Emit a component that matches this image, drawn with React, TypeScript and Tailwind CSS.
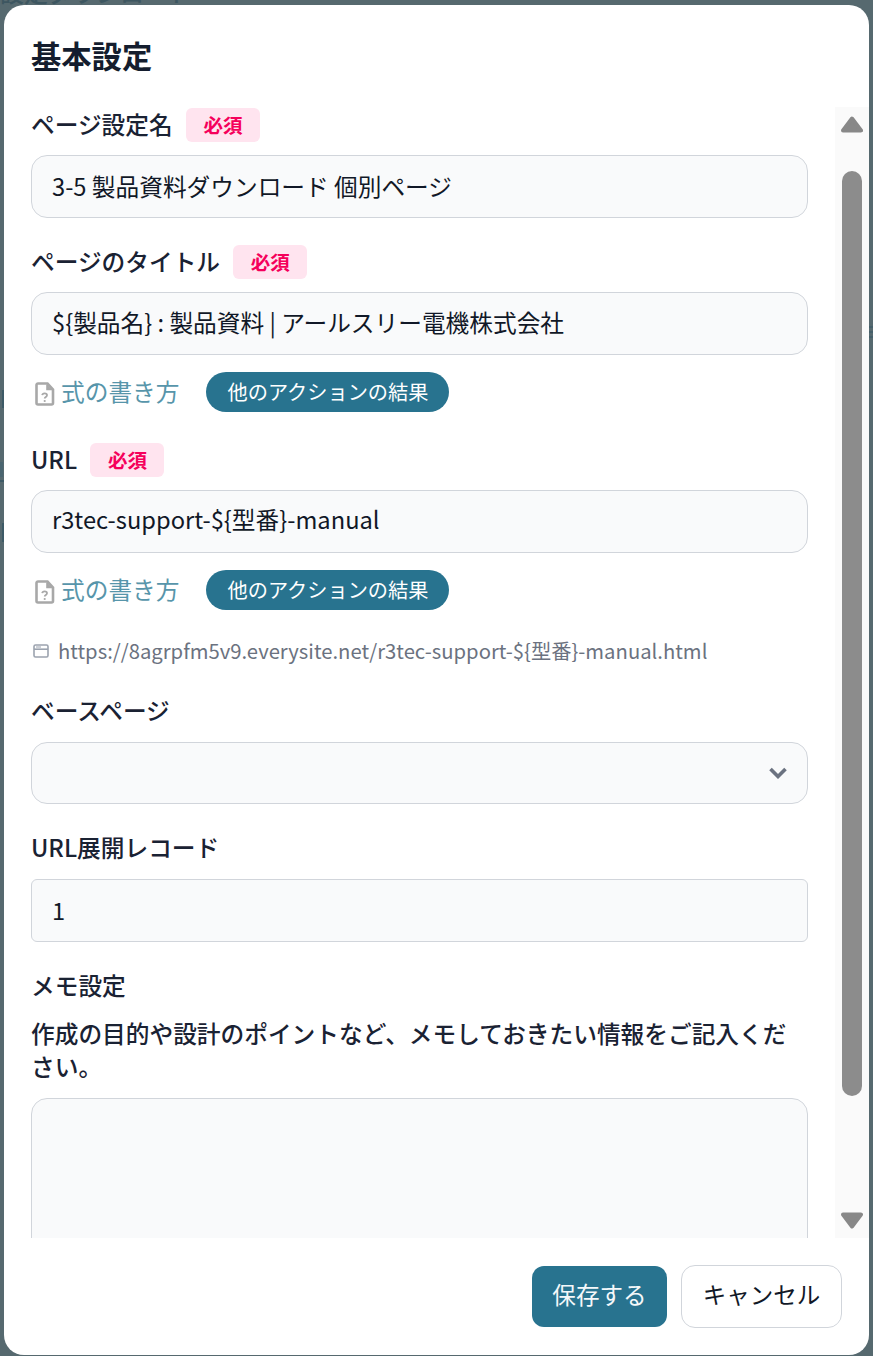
const font = { fontFamily: '"Noto Sans CJK JP", "Noto Sans", sans-serif' };

function Required() {
  return (
    <span className="ml-[13.3px] inline-flex h-[34px] w-[74px] items-center justify-center rounded-[6px] bg-[#ffe4ef] text-[19.5px] font-bold text-[#f5005b]">
      必須
    </span>
  );
}

function Label({ children, required }: { children: string; required?: boolean }) {
  return (
    <div className="flex h-[34px] items-center text-[23.7px] font-medium text-[#1a2233]">
      <span>{children}</span>
      {required && <Required />}
    </div>
  );
}

function Field({ value, shift = "" }: { value: string; shift?: string }) {
  return (
    <div className={`flex h-[63px] w-[777px] items-center rounded-[16px] border border-[#d1d5db] bg-[#f9fafb] pl-[20px] text-[23.7px] text-[#111827] ${shift}`}>
      {value}
    </div>
  );
}

function Helper() {
  return (
    <div className="mt-[17px] flex h-[40px] items-center">
      <svg width="20" height="24" viewBox="0 0 20 24" className="ml-[4px] mr-[6px] mt-[4px]">
        <path d="M3 1.5h9.5l5.5 6v13.5a1.5 1.5 0 0 1-1.5 1.5h-13.5a1.5 1.5 0 0 1-1.5-1.5v-18a1.5 1.5 0 0 1 1.5-1.5z" fill="none" stroke="#a8a8a8" strokeWidth="2.6" />
        <path d="M12 2.5v5h5" fill="#a8a8a8" stroke="#a8a8a8" strokeWidth="1.6" />
        <path d="M7.2 13.2c.2-1.3 1.2-1.8 2.4-1.8 1.4 0 2.4.8 2.4 1.9 0 1.7-2.2 1.7-2.3 3.2" fill="none" stroke="#a8a8a8" strokeWidth="1.8" />
        <circle cx="9.7" cy="19" r="1.1" fill="#a8a8a8" />
      </svg>
      <span className="text-[23.7px] text-[#5795aa]">式の書き方</span>
      <span className="ml-[27px] flex h-[40px] w-[243px] items-center justify-center rounded-full bg-[#28738f] text-[20.2px] font-normal text-white">
        他のアクションの結果
      </span>
    </div>
  );
}

function Backdrop() {
  return (
    <>
      <div className="absolute -top-[22px] left-0 text-[24px] font-medium leading-[28px] text-[#3d5660]">設定ダウンロード</div>
      <div className="absolute left-[2px] top-[390px] h-[18px] w-[2px] bg-[#3d5a66]" />
      <div className="absolute left-0 top-[462px] h-[15px] w-[3px] bg-[#4a6570]" />
      <div className="absolute left-0 top-[480px] h-[2px] w-[4px] bg-[#3d5a66]" />
      <div className="absolute left-[2px] top-[523px] h-[19px] w-[2px] bg-[#3d5a66]" />
      <div className="absolute right-0 top-[326px] h-[2px] w-[4px] bg-[#45606a]" />
      <div className="absolute right-0 top-[331px] h-[2px] w-[4px] bg-[#45606a]" />
      <div className="absolute right-0 top-[336px] h-[2px] w-[4px] bg-[#45606a]" />
    </>
  );
}

export default function App() {
  return (
    <div style={font} className="relative h-[1356px] w-[873px] overflow-hidden bg-[#56696f] pb-px pl-[4px] pr-[4px] pt-[5px]">
      <Backdrop />
      <div className="relative flex h-[1350px] w-[865px] flex-col overflow-hidden rounded-[20px] bg-white">
        <div className="flex h-[102px] items-start pl-[27px] pt-[29px] text-[30.3px] font-bold leading-[42px] text-[#141d2e]">
          基本設定
        </div>
        <div className="flex h-[1131px] overflow-hidden">
          <div className="w-[831px] overflow-hidden pl-[27px]">
            <div className="pt-px">
              <Label required>ページ設定名</Label>
              <div className="mt-[13px]"><Field value="3-5 製品資料ダウンロード 個別ページ" /></div>

              <div className="mt-[27px]"><Label required>ページのタイトル</Label></div>
              <div className="mt-[13px]"><Field value="${製品名} : 製品資料 | アールスリー電機株式会社" shift="pb-[1px]" /></div>
              <Helper />

              <div className="mt-[31px]"><Label required>URL</Label></div>
              <div className="mt-[13px]"><Field value="r3tec-support-${型番}-manual" shift="pb-[3px]" /></div>
              <Helper />

              <div className="mt-[25px] flex h-[32px] items-center text-[20.25px] text-[#6b7280]">
                <svg width="16" height="14" viewBox="0 0 16 14" className="ml-[2px] mr-[9px]">
                  <rect x="1" y="1" width="14" height="12" rx="1.5" fill="none" stroke="#9ca3af" strokeWidth="1.6" />
                  <path d="M1 5.2h14" stroke="#9ca3af" strokeWidth="1.6" />
                  <path d="M3 3h5" stroke="#9ca3af" strokeWidth="1" />
                </svg>
                https://8agrpfm5v9.everysite.net/r3tec-support-${"{"}型番{"}"}-manual.html
              </div>

              <div className="mt-[27px]"><Label>ベースページ</Label></div>
              <div className="mt-[14px] flex h-[62px] w-[777px] items-center justify-end rounded-[16px] border border-[#d1d5db] bg-[#f9fafb] pr-[20px]">
                <svg width="18" height="12" viewBox="0 0 18 12">
                  <path d="M1.5 2l7.5 7.5 7.5-7.5" fill="none" stroke="#6b7280" strokeWidth="3.6" />
                </svg>
              </div>

              <div className="mt-[27px]"><Label>URL展開レコード</Label></div>
              <div className="mt-[14px] flex h-[63px] w-[777px] items-center rounded-[6px] border border-[#d1d5db] bg-[#f9fafb] pl-[20px] text-[23.7px] text-[#111827]">
                1
              </div>

              <div className="mt-[27px]"><Label>メモ設定</Label></div>
              <p className="mt-[14px] w-[777px] text-[23.7px] font-medium leading-[33px] text-[#1a2233]">
                作成の目的や設計のポイントなど、メモしておきたい情報をご記入ください。
              </p>
              <div className="mt-[15px] h-[300px] w-[777px] rounded-[16px] border border-[#d1d5db] bg-[#f9fafb]" />
            </div>
          </div>
          <div className="relative w-[34px] bg-[#fafafa]">
            <svg width="22" height="17" viewBox="0 0 22 17" className="absolute left-[6px] top-[9px]">
              <path d="M11 2.5L20 14.5H2Z" fill="#888888" stroke="#888888" strokeWidth="4" strokeLinejoin="round" />
            </svg>
            <div className="absolute left-[7px] top-[64px] h-[925px] w-[20px] rounded-[10px] bg-[#8c8c8c]" />
            <svg width="22" height="17" viewBox="0 0 22 17" className="absolute left-[6px] top-[1105px]">
              <path d="M11 14.5L20 2.5H2Z" fill="#888888" stroke="#888888" strokeWidth="4" strokeLinejoin="round" />
            </svg>
          </div>
        </div>
        <div className="flex flex-1 items-start justify-end gap-[14px] pr-[27px] pt-[27px]">
          <button className="mt-px h-[61px] w-[135px] rounded-[12px] bg-[#28738f] pb-[3px] text-[23.6px] text-[#f4f8fa]">保存する</button>
          <button className="h-[63px] w-[161px] rounded-[14px] border border-[#d1d5db] bg-white pb-[3px] text-[23.5px] text-[#111827]">キャンセル</button>
        </div>
      </div>
    </div>
  );
}
